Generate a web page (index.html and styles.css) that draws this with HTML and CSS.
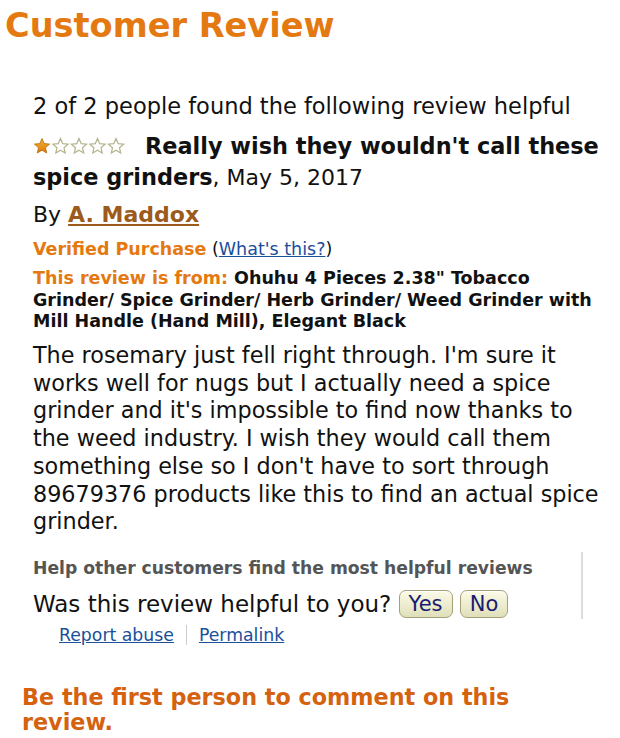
FILE: index.html
```html
<!DOCTYPE html>
<html>
<head>
<meta charset="utf-8">
<link rel="stylesheet" href="styles.css">
</head>
<body>
<div class="page">
  <h1 class="title">Customer Review</h1>
  <div class="review">
    <div class="helpful-count">2 of 2 people found the following review helpful</div>
    <div class="headline">
      <span class="stars">
        <svg width="94" height="18" viewBox="0 0 94 18">
          <defs>
            <linearGradient id="gold" x1="0" y1="0" x2="0" y2="1">
              <stop offset="0" stop-color="#f7b531"/>
              <stop offset="1" stop-color="#d97a0a"/>
            </linearGradient>
            <path id="st" d="M9 1.5 L11.2 6.6 L16.6 7.1 L12.5 10.7 L13.7 16 L9 13.2 L4.3 16 L5.5 10.7 L1.4 7.1 L6.8 6.6 Z"/>
          </defs>
          <use href="#st" x="0" fill="url(#gold)" stroke="#b86a10" stroke-width="0.8"/>
          <use href="#st" x="18.5" fill="#fff" stroke="#b5b48e" stroke-width="1.2"/>
          <use href="#st" x="37" fill="#fff" stroke="#b5b48e" stroke-width="1.2"/>
          <use href="#st" x="55.5" fill="#fff" stroke="#b5b48e" stroke-width="1.2"/>
          <use href="#st" x="74" fill="#fff" stroke="#b5b48e" stroke-width="1.2"/>
        </svg>
      </span><b class="summary">Really wish they wouldn't call these spice grinders</b>, May 5, 2017
    </div>
    <div class="byline">By <a class="author" href="#">A. Maddox</a></div>
    <div class="verified"><span class="orange-label">Verified Purchase</span> (<a class="blue-link" href="#">What's this?</a>)</div>
    <div class="product"><span class="orange-label">This review is from:</span> Ohuhu 4 Pieces 2.38" Tobacco Grinder/ Spice Grinder/ Herb Grinder/ Weed Grinder with Mill Handle (Hand Mill), Elegant Black</div>
    <p class="body">The rosemary just fell right through. I'm sure it works well for nugs but I actually need a spice grinder and it's impossible to find now thanks to the weed industry. I wish they would call them something else so I don't have to sort through 89679376 products like this to find an actual spice grinder.</p>
    <div class="vote-box">
      <div class="vote-main">
        <div class="help-others">Help other customers find the most helpful reviews</div>
        <div class="ask">Was this review helpful to you? <span class="btn">Yes</span> <span class="btn">No</span></div>
        <div class="links"><a class="blue-link" href="#">Report abuse</a><span class="sep"></span><a class="blue-link" href="#">Permalink</a></div>
      </div>
      <div class="vrule"></div>
    </div>
  </div>
  <div class="first-comment">Be the first person to comment on this review.</div>
</div>
</body>
</html>
```

FILE: styles.css
```css
html, body {
  margin: 0;
  padding: 0;
  background: #fff;
}
body {
  font-family: "DejaVu Sans", Verdana, sans-serif;
  color: #111;
}
.page {
  width: 620px;
  height: 738px;
  overflow: hidden;
}
.title {
  margin: 0;
  padding: 6px 0 0 5px;
  font-size: 33.6px;
  line-height: 40px;
  font-weight: bold;
  color: #e47911;
}
.review {
  padding: 46px 0 0 33px;
}
.helpful-count {
  font-size: 22.5px;
  line-height: 28px;
}
.headline {
  margin-top: 11px;
  font-size: 22px;
  line-height: 30px;
  width: 575px;
}
.stars {
  display: inline-block;
  vertical-align: -1px;
  margin-right: 18px;
}
.stars svg { display: block; }
.summary {
  font-size: 22.4px;
}
.byline {
  margin-top: 8px;
  font-size: 22px;
  line-height: 28px;
}
.author {
  color: #9c5a1c;
  font-weight: bold;
  text-decoration: underline;
}
.verified {
  margin-top: 8px;
  font-size: 17.5px;
  line-height: 24px;
}
.orange-label {
  color: #e47911;
  font-weight: bold;
}
.blue-link {
  color: #1a4f9a;
  text-decoration: underline;
}
.product {
  margin-top: 7px;
  font-size: 17.5px;
  line-height: 21.5px;
  font-weight: bold;
  width: 572px;
}
.body {
  margin: 9.5px 0 0 0;
  font-size: 22.3px;
  line-height: 27.7px;
  width: 575px;
}
.vote-box {
  margin-top: 20px;
  display: flex;
  align-items: flex-start;
  width: 550px;
}
.vote-main { flex: 1; }
.vrule {
  width: 2px;
  height: 67px;
  margin-top: -4px;
  background: #dcdcdc;
}
.help-others {
  font-size: 17.2px;
  line-height: 24px;
  font-weight: bold;
  color: #555;
}
.ask {
  margin-top: 7px;
  font-size: 23px;
  line-height: 34px;
}
.btn {
  display: inline-block;
  font-size: 21px;
  line-height: 26px;
  padding: 0 9px;
  color: #1b1b70;
  border: 1px solid #a49f74;
  border-radius: 7px;
  background: linear-gradient(#fbfbe8, #e0dfba);
  box-shadow: inset 0 1px 0 #fff;
  vertical-align: 1px;
}
.links {
  padding-left: 26px;
  font-size: 17.3px;
  line-height: 28px;
  display: flex;
  align-items: center;
}
.sep {
  display: inline-block;
  width: 1px;
  height: 20px;
  background: #ccc;
  margin: 0 12px;
}
.first-comment {
  padding: 36px 0 0 22px;
  font-size: 22.3px;
  line-height: 25px;
  font-weight: bold;
  color: #d5620f;
  width: 520px;
}
```
